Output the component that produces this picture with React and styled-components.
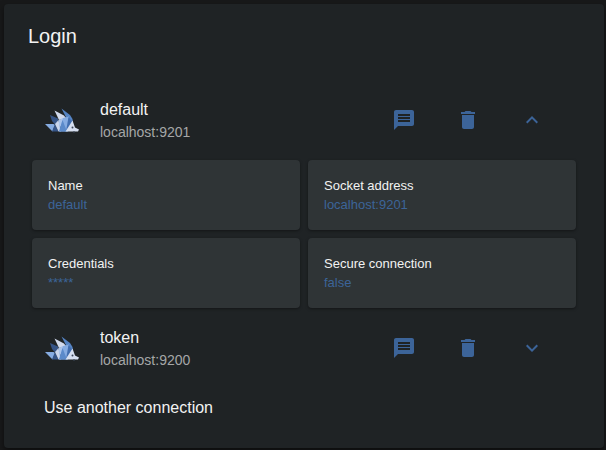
import { useState } from "react";
import styled, { createGlobalStyle } from "styled-components";

const connections = [
  {
    name: "default",
    address: "localhost:9201",
    credentials: "*****",
    secure: false,
  },
  {
    name: "token",
    address: "localhost:9200",
    credentials: "*****",
    secure: false,
  },
];

const icons = {
  message:
    "M20 2H4c-1.1 0-1.99.9-1.99 2L2 22l4-4h14c1.1 0 2-.9 2-2V4c0-1.1-.9-2-2-2zm-2 12H6v-2h12v2zm0-3H6V9h12v2zm0-3H6V6h12v2z",
  trash:
    "M6 19c0 1.1.9 2 2 2h8c1.1 0 2-.9 2-2V7H6v12zM19 4h-3.5l-1-1h-5l-1 1H5v2h14V4z",
  up: "M12 8l-6 6 1.41 1.41L12 10.83l4.59 4.58L18 14z",
  down: "M16.59 8.59L12 13.17 7.41 8.59 6 10l6 6 6-6z",
};

function Icon({ name }) {
  return (
    <svg width="24" height="24" viewBox="0 0 24 24" fill="currentColor">
      <path d={icons[name]} />
    </svg>
  );
}

function Hedgehog() {
  return (
    <svg width="40" height="40" viewBox="0 0 40 40" aria-hidden="true">
      <path d="M6 15 14 18.500 14 21 11 24.500 8 21z" fill="#355487" />
      <path d="M10.500 10.500 20 15.500 22 18 15 20z" fill="#d0d9ec" />
      <path d="M17.500 8.500 26 15 28.500 19 29 23 24 21z" fill="#5584c4" />
      <path d="M1 24 9.500 24 11 25 8.500 31.500z" fill="#86ace2" />
      <path d="M11 24 14.500 31.500H8z" fill="#355487" />
      <path d="M14.500 20 11 24 14.500 31.500 17 31.500z" fill="#c9d5ec" />
      <path d="M14.500 20 19 18 19.500 21 15.500 29z" fill="#a9c3ea" />
      <path d="M19 18 25 16.500 24 31.500H15.500z" fill="#86ace2" />
      <path d="M18.500 20 23 31.500H15z" fill="#5b8aca" />
      <path d="M24.500 17 28.500 22 22 31.500z" fill="#426eaf" />
      <path d="M28.500 20.500 31 27.500 35 29.500 34 31.500H21.500z" fill="#d6dff0" />
      <circle cx="28.500" cy="27.500" r="1" fill="#3b4658" />
      <path d="M29 31.500h2v1h-2z" fill="#3b4658" />
    </svg>
  );
}

function Connection({ connection, initiallyOpen }) {
  const [open, setOpen] = useState(initiallyOpen);

  const details = [
    ["Name", connection.name],
    ["Socket address", connection.address],
    ["Credentials", connection.credentials],
    ["Secure connection", String(connection.secure)],
  ];

  return (
    <li>
      <Row>
        <Hedgehog />
        <Summary>
          <Name>{connection.name}</Name>
          <Address>{connection.address}</Address>
        </Summary>
        <IconButton aria-label={`Message ${connection.name}`}>
          <Icon name="message" />
        </IconButton>
        <IconButton aria-label={`Delete ${connection.name}`}>
          <Icon name="trash" />
        </IconButton>
        <IconButton
          aria-label={`Details of ${connection.name}`}
          aria-expanded={open}
          onClick={() => setOpen(!open)}
        >
          <Icon name={open ? "up" : "down"} />
        </IconButton>
      </Row>
      {open && (
        <Details>
          {details.map(([label, value]) => (
            <Detail key={label}>
              <dt>{label}</dt>
              <dd>{value}</dd>
            </Detail>
          ))}
        </Details>
      )}
    </li>
  );
}

function App() {
  return (
    <>
      <GlobalStyle />
      <Card>
        <Title>Login</Title>
        <List>
          {connections.map((connection, index) => (
            <Connection
              key={connection.name}
              connection={connection}
              initiallyOpen={index === 0}
            />
          ))}
        </List>
        <OtherButton>Use another connection</OtherButton>
      </Card>
    </>
  );
}

const GlobalStyle = createGlobalStyle`
  * {
    box-sizing: border-box;
    margin: 0;
    padding: 0;
  }

  body {
    background-color: #18191a;
    color: #f2f2f2;
    font-family: "Liberation Sans", Arial, sans-serif;
  }

  #root {
    display: flow-root;
  }
`;

const Card = styled.main`
  margin: 4px 2px 2px 4px;
  padding: 20px 28px 12px;
  border-radius: 4px;
  background-color: #1f2325;
  box-shadow: 0 3px 6px rgba(0, 0, 0, 0.5);
`;

const Title = styled.h1`
  padding: 0 0 40px;
  margin-left: -4px;
  font-size: 20px;
  font-weight: 400;
  line-height: 24px;
`;

const List = styled.ul`
  list-style: none;
`;

const Row = styled.div`
  display: flex;
  align-items: center;
  gap: 16px;
  height: 64px;
  padding: 0 20px 0 12px;
`;

const Summary = styled.div`
  flex: 1;
`;

const Name = styled.h2`
  font-size: 16px;
  font-weight: 400;
  line-height: 24px;
`;

const Address = styled.p`
  color: #a5a7a8;
  font-size: 14px;
  line-height: 20px;
`;

const IconButton = styled.button`
  display: flex;
  align-items: center;
  justify-content: center;
  width: 48px;
  height: 48px;
  border: none;
  border-radius: 50%;
  background: none;
  color: #3c6499;
  cursor: pointer;
`;

const Details = styled.dl`
  display: grid;
  grid-template-columns: 1fr 1fr;
  gap: 8px;
  padding: 8px 0;
`;

const Detail = styled.div`
  padding: 16px;
  border-radius: 4px;
  background-color: #2f3436;
  box-shadow: 0 1px 3px rgba(0, 0, 0, 0.4);
  font-size: 13px;
  line-height: 19px;

  dd {
    color: #3c6499;
  }
`;

const OtherButton = styled.button`
  display: block;
  width: 100%;
  height: 56px;
  padding: 0 12px;
  border: none;
  background: none;
  color: inherit;
  font-family: inherit;
  font-size: 16px;
  text-align: left;
  cursor: pointer;
`;

export default App;
